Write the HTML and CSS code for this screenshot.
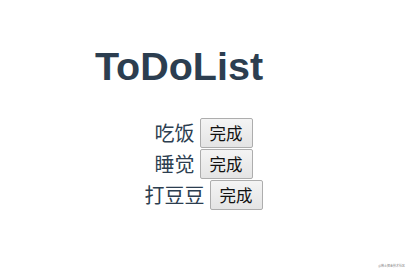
FILE: index.html
```html
<!DOCTYPE html>
<html lang="zh">
<head>
<meta charset="utf-8">
<title>ToDoList</title>
<link rel="stylesheet" href="styles.css">
</head>
<body>
<div class="app">
  <h1 class="title">ToDoList</h1>
  <ul class="list">
    <li class="item"><span class="name">吃饭</span><button class="done">完成</button></li>
    <li class="item"><span class="name">睡觉</span><button class="done">完成</button></li>
    <li class="item"><span class="name">打豆豆</span><button class="done">完成</button></li>
  </ul>
</div>
<div class="mark">@稀土掘金技术社区</div>
</body>
</html>
```
FILE: styles.css
```css
html, body {
  margin: 0;
  padding: 0;
  background: #ffffff;
}
body {
  width: 411px;
  height: 273px;
  position: relative;
  overflow: hidden;
  font-family: "Liberation Sans", "Noto Sans CJK SC", sans-serif;
  color: #2c3e50;
}
.app {
  padding-top: 44px;
  display: flex;
  flex-direction: column;
}
.title {
  margin: 0;
  font-size: 39.5px;
  line-height: 44px;
  font-weight: bold;
  text-align: center;
  padding-right: 53px;
  color: #2c3e50;
}
.list {
  list-style: none;
  margin: 29px 0 0 0;
  padding: 0 4px 0 0;
  display: flex;
  flex-direction: column;
}
.item {
  height: 31px;
  display: flex;
  align-items: center;
  justify-content: center;
  gap: 5px;
}
.name {
  font-family: "Noto Sans CJK SC", sans-serif;
  font-size: 20px;
  line-height: 24px;
  color: #2c3e50;
}
.done {
  box-sizing: border-box;
  width: 53px;
  height: 30px;
  padding: 0;
  margin: 0;
  border: 1px solid #adadad;
  border-radius: 2px;
  background: linear-gradient(#f4f4f4, #e4e4e4);
  font-family: "Noto Sans CJK SC", sans-serif;
  font-size: 16.5px;
  line-height: 28px;
  color: #111;
}
.mark {
  position: absolute;
  right: 6px;
  bottom: 5px;
  font-family: "Noto Sans CJK SC", sans-serif;
  font-size: 3px;
  color: #8a8a8a;
}
```
